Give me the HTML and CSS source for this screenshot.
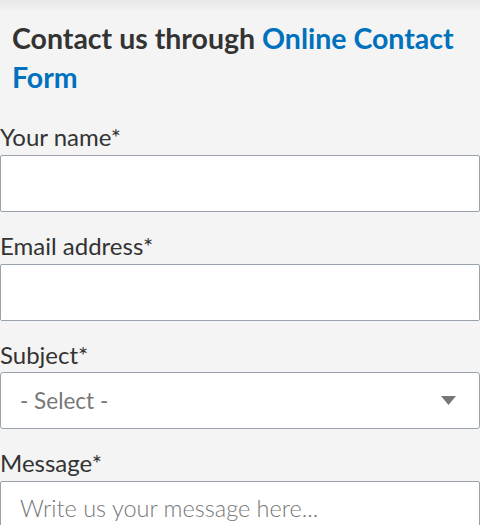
FILE: index.html
```html
<!DOCTYPE html>
<html lang="en">
<head>
<meta charset="utf-8">
<link rel="stylesheet" href="styles.css">
</head>
<body>
<main class="page">
  <h2 class="title">Contact us through <span class="accent">Online Contact Form</span></h2>
  <form class="form">
    <div class="field">
      <label class="label" for="name">Your name*</label>
      <input class="control" id="name" type="text">
    </div>
    <div class="field">
      <label class="label" for="email">Email address*</label>
      <input class="control" id="email" type="email">
    </div>
    <div class="field">
      <label class="label" for="subject">Subject*</label>
      <div class="select" id="subject">
        <span class="select-text">- Select -</span>
        <svg class="caret" width="15" height="9" viewBox="0 0 15 9"><path d="M0 0H15L7.5 9Z" fill="#777"/></svg>
      </div>
    </div>
    <div class="field">
      <label class="label" for="msg">Message*</label>
      <textarea class="control area" id="msg" placeholder="Write us your message here..."></textarea>
    </div>
  </form>
</main>
</body>
</html>
```
FILE: styles.css
```css
html, body {
  margin: 0;
  padding: 0;
  background: #f4f4f4;
}
body {
  font-family: Lato, "Liberation Sans", sans-serif;
  color: #333;
  overflow: hidden;
  height: 525px;
}
.page {
  background: linear-gradient(#e8e8e8 0, #f4f4f4 12px);
  padding-top: 19px;
  min-height: 525px;
}
.title {
  margin: 0 0 26px;
  padding: 0 12px;
  font-size: 28.5px;
  line-height: 39px;
  font-weight: 700;
  color: #333;
}
.accent { color: #0071bc; }
.form {
  display: flex;
  flex-direction: column;
  gap: 20px;
}
.field {
  display: flex;
  flex-direction: column;
  gap: 3px;
}
.label {
  font-size: 24px;
  line-height: 28.8px;
  color: #333;
}
.control {
  box-sizing: border-box;
  width: 480px;
  height: 57px;
  margin: 0;
  border: 1px solid #9aa3ab;
  border-radius: 2px;
  background: #fff;
  font-family: Lato, "Liberation Sans", sans-serif;
  font-size: 22px;
  padding: 0 19px;
  outline: none;
}
.area {
  height: 90px;
  padding-top: 12px;
  resize: none;
  font-size: 23.5px;
  font-weight: 300;
}
.area::placeholder { color: #777; }
.select {
  box-sizing: border-box;
  width: 480px;
  height: 57px;
  border: 1px solid #9aa3ab;
  border-radius: 3px;
  background: #fff;
  display: flex;
  align-items: center;
  justify-content: space-between;
  padding: 0 23px 0 19px;
}
.select-text {
  font-size: 22.5px;
  color: #777;
}
.caret { display: block; }
```
